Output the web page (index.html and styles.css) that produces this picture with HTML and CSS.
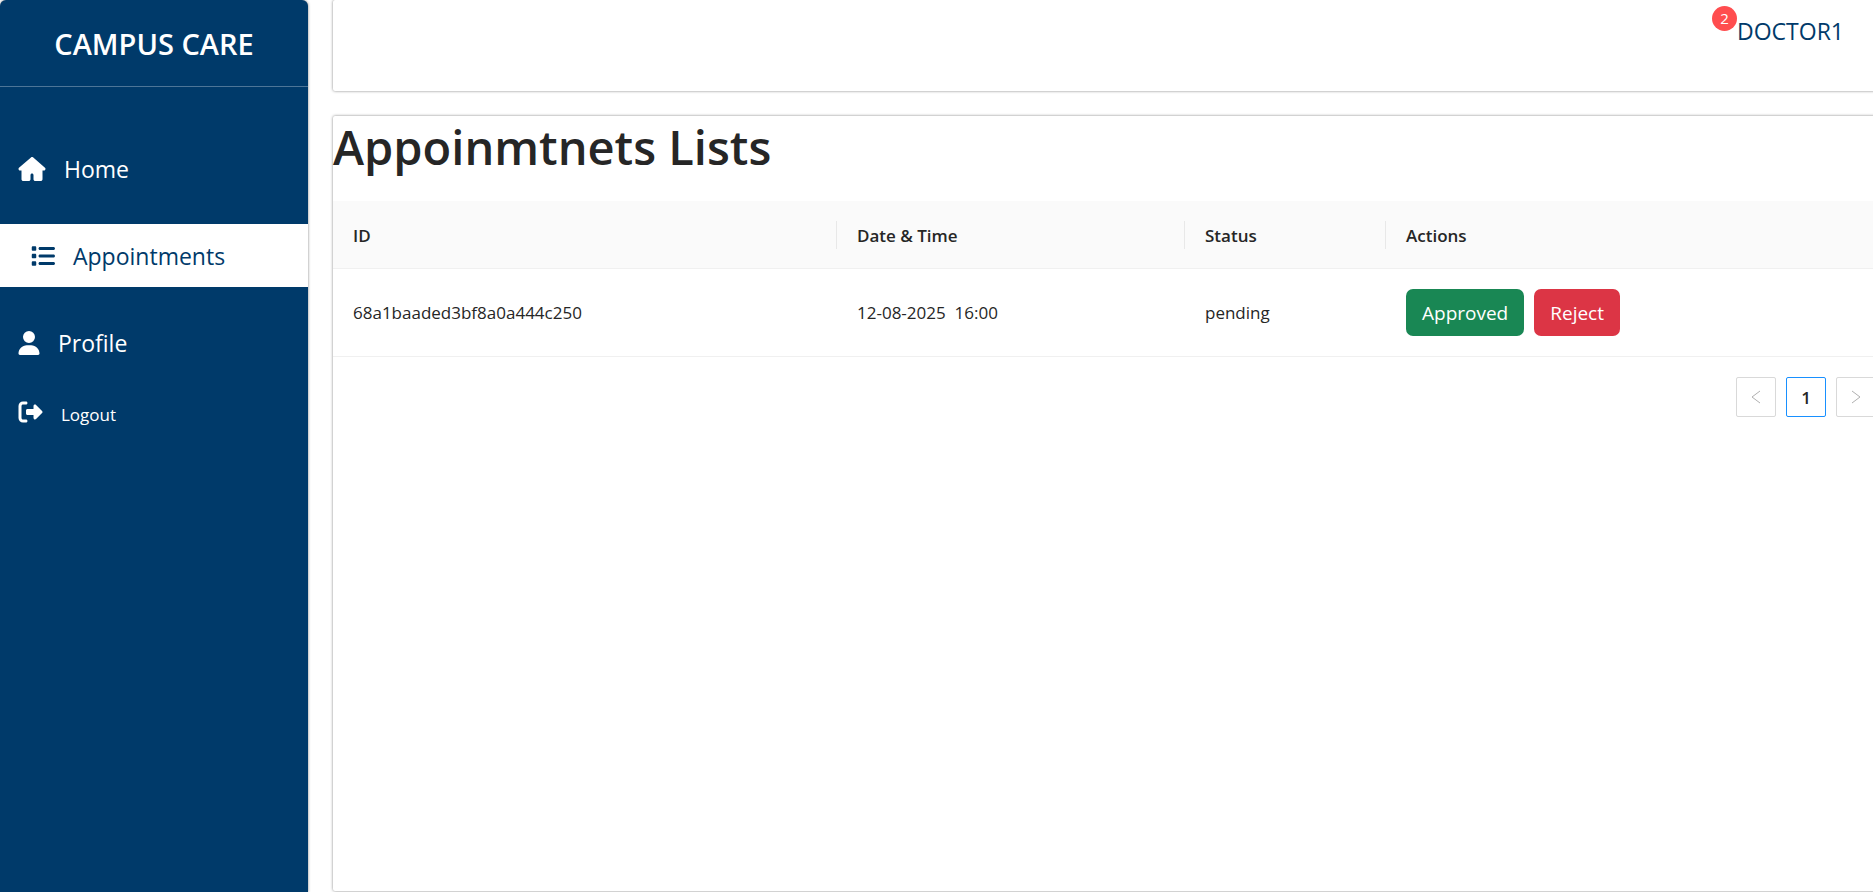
FILE: index.html
```html
<!DOCTYPE html>
<html lang="en">
<head>
<meta charset="utf-8">
<title>Campus Care</title>
<meta name="viewport" content="width=device-width, initial-scale=1">
<link rel="stylesheet" href="styles.css">
</head>
<body>
<div class="layout">
  <aside class="sidebar">
    <div class="brand">CAMPUS CARE</div>
    <nav class="menu">
      <a class="item" href="#">
        <svg class="icon home-icon" viewBox="0 0 576 512" aria-hidden="true"><path d="M575.800 255.500c0 18-15 32.100-32 32.100h-32l.7 160.200c0 2.700-.2 5.400-.5 8.100V472c0 22.100-17.900 40-40 40H360c-22.100 0-40-17.900-40-40v-88c0-17.700-14.300-32-32-32s-32 14.300-32 32v88c0 22.100-17.900 40-40 40H104c-22.100 0-40-17.900-40-40V287.600H32c-18 0-32-14-32-32.100 0-9 3-17 10-24L266.400 8c7-7 15-8 22-8s15 2 21 7l255.400 224.500c8 7 12 15 11 24z"/></svg>
        <span>Home</span>
      </a>
      <a class="item active" href="#" aria-current="page">
        <svg class="icon list-icon" viewBox="0 0 512 512" aria-hidden="true"><path d="M40 48C26.700 48 16 58.700 16 72v48c0 13.300 10.700 24 24 24h48c13.300 0 24-10.700 24-24V72c0-13.300-10.700-24-24-24H40zM192 64c-17.700 0-32 14.300-32 32s14.300 32 32 32h288c17.700 0 32-14.300 32-32s-14.300-32-32-32H192zm0 160c-17.700 0-32 14.300-32 32s14.300 32 32 32h288c17.700 0 32-14.300 32-32s-14.300-32-32-32H192zm0 160c-17.700 0-32 14.300-32 32s14.300 32 32 32h288c17.700 0 32-14.300 32-32s-14.300-32-32-32H192zM16 232v48c0 13.300 10.700 24 24 24h48c13.300 0 24-10.700 24-24v-48c0-13.300-10.700-24-24-24H40c-13.300 0-24 10.700-24 24zm24 136c-13.300 0-24 10.700-24 24v48c0 13.300 10.700 24 24 24h48c13.300 0 24-10.700 24-24v-48c0-13.300-10.700-24-24-24H40z"/></svg>
        <span>Appointments</span>
      </a>
      <a class="item" href="#">
        <svg class="icon user-icon" viewBox="0 0 448 512" aria-hidden="true"><path d="M224 256a128 128 0 1 0 0-256 128 128 0 1 0 0 256zm-45.700 48C79.800 304 0 383.800 0 482.300 0 498.700 13.300 512 29.700 512h388.600c16.400 0 29.700-13.300 29.700-29.700 0-98.500-79.800-178.300-178.300-178.300h-91.400z"/></svg>
        <span>Profile</span>
      </a>
      <button class="item logout" type="button">
        <svg class="icon out-icon" viewBox="0 0 512 512" aria-hidden="true"><path d="M502.600 278.600c12.500-12.500 12.500-32.800 0-45.300l-128-128C365.400 96.200 352 93.500 340 98.400S320.200 115.100 320.200 128v64H192c-17.700 0-32 14.300-32 32v64c0 17.700 14.300 32 32 32h128.200v64c0 12.900 7.800 24.600 19.800 29.600s25.700 2.200 34.900-6.900l127.700-128.100zM160 96c17.700 0 32-14.300 32-32s-14.300-32-32-32H96C43 32 0 75 0 128v256c0 53 43 96 96 96h64c17.700 0 32-14.300 32-32s-14.300-32-32-32H96c-17.700 0-32-14.300-32-32V128c0-17.700 14.300-32 32-32h64z"/></svg>
        <span>Logout</span>
      </button>
    </nav>
  </aside>
  <div class="main">
    <header class="topbar">
      <a class="user" href="#"><span class="badge">2</span>DOCTOR1</a>
    </header>
    <main class="content">
      <h1>Appoinmtnets Lists</h1>
      <table class="table">
        <thead>
          <tr><th class="col-id" scope="col">ID</th><th class="col-date" scope="col">Date &amp; Time</th><th class="col-status" scope="col">Status</th><th scope="col">Actions</th></tr>
        </thead>
        <tbody>
          <tr>
            <td>68a1baaded3bf8a0a444c250</td>
            <td>12-08-2025 &nbsp;16:00</td>
            <td>pending</td>
            <td><div class="actions"><button class="btn approve" type="button">Approved</button><button class="btn reject" type="button">Reject</button></div></td>
          </tr>
        </tbody>
      </table>
      <nav class="pages" aria-label="Pagination">
        <button type="button" disabled aria-label="Previous page"><svg viewBox="0 0 12 12" aria-hidden="true"><path d="M10 0 2 6l8 6"/></svg></button>
        <button class="current" type="button" aria-current="page">1</button>
        <button type="button" disabled aria-label="Next page"><svg viewBox="0 0 12 12" aria-hidden="true"><path d="m2 0 8 6-8 6"/></svg></button>
      </nav>
    </main>
  </div>
</div>
</body>
</html>
```
FILE: styles.css
```css
* {
  box-sizing: border-box;
}

body {
  margin: 0;
  overflow: hidden;
  background: #fff;
  color: #262626;
  font-family: "Segoe UI", "Open Sans", sans-serif;
  font-size: 17px;
}

button {
  font-family: inherit;
}

.layout {
  display: flex;
  gap: 25px;
  height: 100vh;
}

.sidebar {
  flex: 0 0 308px;
  border-radius: 6px 6px 0 0;
  background: #003a6a;
  box-shadow: 0 0 3px #808080;
  color: #fff;
}

.brand {
  padding: 25px 0 23px;
  border-bottom: 1px solid #4d7597;
  font-size: 29px;
  font-weight: 600;
  line-height: 38px;
  text-align: center;
}

.menu {
  display: flex;
  flex-direction: column;
  gap: 24px;
  padding-top: 50px;
}

.item {
  display: flex;
  align-items: center;
  gap: 18px;
  height: 63px;
  padding: 0 18px;
  border: 0;
  background: none;
  color: inherit;
  font-size: 23px;
  text-decoration: none;
}

.item.active {
  padding-left: 31px;
  background: #fff;
  color: #003a6a;
}

.item.logout {
  height: 40px;
  margin-top: -6px;
  font-size: 17px;
}

.logout span {
  padding-top: 4px;
}

.icon {
  height: 24px;
  fill: currentColor;
}

.home-icon {
  width: 28px;
}

.list-icon {
  width: 24px;
}

.user-icon {
  width: 22px;
}

.out-icon {
  width: 25px;
}

.main {
  display: flex;
  flex: 1;
  flex-direction: column;
  gap: 25px;
  margin: 0 -3px 1px 0;
}

.topbar {
  display: flex;
  justify-content: flex-end;
  height: 91px;
  padding: 14px 32px;
  border-radius: 2px;
  box-shadow: 0 0 3px #808080;
}

.user {
  position: relative;
  color: #003a6a;
  font-size: 23px;
  line-height: 34px;
  text-decoration: none;
}

.badge {
  position: absolute;
  top: -8px;
  right: 100%;
  width: 25px;
  height: 25px;
  border-radius: 50%;
  background: #ff4d4f;
  color: #fff;
  font-size: 15px;
  line-height: 25px;
  text-align: center;
}

.content {
  flex: 1;
  border-radius: 2px;
  box-shadow: 0 0 3px #808080;
}

h1 {
  margin: 0 0 23px;
  font-size: 47px;
  font-weight: 600;
  line-height: 62px;
}

.table {
  width: 100%;
  border-collapse: separate;
  border-spacing: 0;
  table-layout: fixed;
}

th,
td {
  padding: 20px;
  border-bottom: 1px solid #f0f0f0;
  text-align: left;
}

th {
  position: relative;
  padding: 21px 20px 19px;
  background: #fafafa;
  font-weight: 600;
  line-height: 27px;
}

th:not(:last-child)::after {
  content: "";
  position: absolute;
  top: 20px;
  right: 0;
  width: 1px;
  height: 28px;
  background: #e8e8e8;
}

.col-id {
  width: 504px;
}

.col-date {
  width: 348px;
}

.col-status {
  width: 201px;
}

.actions {
  display: flex;
  gap: 10px;
}

.btn {
  height: 47px;
  padding: 0 16px;
  border: 0;
  border-radius: 7px;
  color: #fff;
  font-size: 19px;
}

.approve {
  background: #198754;
}

.reject {
  background: #dc3545;
}

.pages {
  display: flex;
  justify-content: flex-end;
  gap: 10px;
  margin-top: 20px;
}

.pages button {
  display: flex;
  align-items: center;
  justify-content: center;
  width: 40px;
  height: 40px;
  padding: 0;
  border: 1px solid #d9d9d9;
  border-radius: 2px;
  background: #fff;
  color: #262626;
  font-size: 17px;
  font-weight: 600;
}

.pages .current {
  border-color: #1890ff;
}

.pages svg {
  width: 12px;
  height: 12px;
  fill: none;
  overflow: visible;
  stroke: #b0b0b0;
}
```
